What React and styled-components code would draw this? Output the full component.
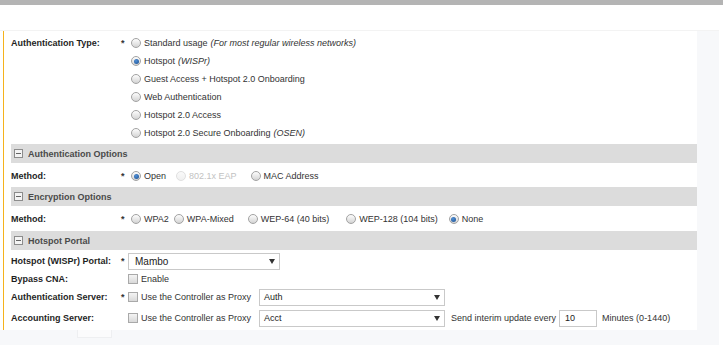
import React from 'react';
import styled, { createGlobalStyle } from 'styled-components';

const GlobalStyle = createGlobalStyle`
  html, body {
    margin: 0;
    padding: 0;
    background: #ffffff;
  }
  body {
    font-family: "Liberation Sans", Arial, sans-serif;
    font-size: 9px;
    color: #333333;
  }
`;

const TopBar = styled.div`
  height: 5px;
  background: #b4b4b4;
`;

const Page = styled.div`
  width: 719px;
  margin-top: 25px;
  display: flex;
  border-top: 1px solid #f3f3f3;
`;

const Panel = styled.div`
  flex: 1;
  margin-left: 3px;
  border-left: 1px solid #f5b21c;
  padding: 3px 0 0 7px;
  display: flex;
  flex-direction: column;
`;

const RightRail = styled.div`
  width: 22px;
  background: #f7f8fa;
`;

const Footer = styled.div`
  width: 719px;
  height: 15px;
  background: #f7f8fa;
  display: flex;
  padding-left: 77px;
  box-sizing: border-box;
`;

const GhostBox = styled.div`
  width: 33px;
  height: 7px;
  border: 1px solid #eeeff1;
  border-top: none;
  background: #fbfbfc;
`;

const Row = styled.div`
  display: grid;
  grid-template-columns: 108px 9px 1fr;
  align-items: ${p => (p.$top ? 'start' : 'center')};
  min-height: ${p => p.$h || 18}px;
`;

const Label = styled.div`
  font-weight: bold;
  color: #1f1f1f;
  line-height: 18px;
  white-space: nowrap;
`;

const Star = styled.div`
  font-weight: bold;
  color: #333333;
  line-height: 18px;
  padding-left: 2px;
`;

const Stack = styled.div`
  display: flex;
  flex-direction: column;
`;

const Line = styled.div`
  display: flex;
  align-items: center;
  height: ${p => p.$h || 18}px;
  white-space: nowrap;
`;

const Option = styled.label`
  display: inline-flex;
  align-items: center;
  margin-right: ${p => p.$gap ?? 8}px;
  color: ${p => (p.$disabled ? '#c2c2c2' : '#333333')};
`;

const RadioDot = styled.span`
  box-sizing: border-box;
  width: 10px;
  height: 10px;
  border-radius: 50%;
  margin: 0 3px;
  border: 1px solid ${p => (p.$disabled ? '#e0e0e0' : '#a2a2a2')};
  background: ${p =>
    p.$disabled
      ? 'linear-gradient(#fafafa, #f0f0f0)'
      : 'linear-gradient(#fdfdfd, #d4d4d4)'};
  display: inline-flex;
  align-items: center;
  justify-content: center;
  &::after {
    content: '';
    display: ${p => (p.$checked ? 'block' : 'none')};
    width: 5px;
    height: 5px;
    border-radius: 50%;
    background: radial-gradient(circle at 40% 35%, #4f8fd6, #1d4f8f);
  }
`;

const Box = styled.span`
  box-sizing: border-box;
  width: 10px;
  height: 10px;
  margin-right: 3px;
  border: 1px solid #a9a9a9;
  background: linear-gradient(#f4f4f4, #d9d9d9);
`;

const Italic = styled.i`
  margin-left: 3px;
`;

const Header = styled.div`
  height: 19px;
  margin: ${p => p.$mt ?? 2}px 0 ${p => p.$mb ?? 4}px;
  background: #dcdcdc;
  display: flex;
  align-items: center;
  padding-left: 3px;
  font-weight: bold;
  color: #4a4a4a;
`;

const Toggle = styled.span`
  box-sizing: border-box;
  width: 9px;
  height: 9px;
  margin-right: 5px;
  border: 1px solid #8c8c8c;
  background: #f4f4f4;
  position: relative;
  &::after {
    content: '';
    position: absolute;
    left: 1px;
    right: 1px;
    top: 3px;
    height: 1px;
    background: #666666;
  }
`;

const Select = styled.div`
  box-sizing: border-box;
  width: ${p => p.$w}px;
  height: 17px;
  border: 1px solid #c9c9c9;
  background: #ffffff;
  display: flex;
  align-items: center;
  justify-content: space-between;
  padding: 0 4px 0 ${p => p.$pl || 4}px;
  margin-left: ${p => p.$ml || 0}px;
  margin-right: 6px;
  font-size: ${p => p.$fs || 9}px;
  color: #222222;
`;

const Caret = styled.span`
  width: 0;
  height: 0;
  border-left: 3px solid transparent;
  border-right: 3px solid transparent;
  border-top: 5px solid #333333;
`;

const NumInput = styled.div`
  box-sizing: border-box;
  width: 38px;
  height: 17px;
  border: 1px solid #c9c9c9;
  padding-left: 5px;
  display: flex;
  align-items: center;
  color: #222222;
  margin: 0 5px 0 3px;
`;

const Radio = ({ children, checked, disabled, gap }) => (
  <Option $disabled={disabled} $gap={gap}>
    <RadioDot $checked={checked} $disabled={disabled} />
    {children}
  </Option>
);

const Check = ({ children }) => (
  <Option $gap={0}>
    <Box />
    {children}
  </Option>
);

const authTypes = [
  ['Standard usage', 'For most regular wireless networks', false],
  ['Hotspot', 'WISPr', true],
  ['Guest Access + Hotspot 2.0 Onboarding', null, false],
  ['Web Authentication', null, false],
  ['Hotspot 2.0 Access', null, false],
  ['Hotspot 2.0 Secure Onboarding', 'OSEN', false],
];

export default function App() {
  return (
    <>
      <GlobalStyle />
      <TopBar />
      <Page>
        <Panel>
          <Row $top>
            <Label>Authentication Type:</Label>
            <Star>*</Star>
            <Stack>
              {authTypes.map(([text, note, on]) => (
                <Line key={text}>
                  <Radio checked={on}>
                    {text}
                    {note && <Italic>({note})</Italic>}
                  </Radio>
                </Line>
              ))}
            </Stack>
          </Row>

          <Header>
            <Toggle />
            Authentication Options
          </Header>
          <Row>
            <Label>Method:</Label>
            <Star>*</Star>
            <Line>
              <Radio checked gap={7}>Open</Radio>
              <Radio disabled gap={11}>802.1x EAP</Radio>
              <Radio>MAC Address</Radio>
            </Line>
          </Row>

          <Header>
            <Toggle />
            Encryption Options
          </Header>
          <Row>
            <Label>Method:</Label>
            <Star>*</Star>
            <Line>
              <Radio gap={2}>WPA2</Radio>
              <Radio gap={11}>WPA-Mixed</Radio>
              <Radio gap={14}>WEP-64 (40 bits)</Radio>
              <Radio gap={8}>WEP-128 (104 bits)</Radio>
              <Radio checked>None</Radio>
            </Line>
          </Row>

          <Header $mt={3} $mb={2}>
            <Toggle />
            Hotspot Portal
          </Header>
          <Row>
            <Label>Hotspot (WISPr) Portal:</Label>
            <Star>*</Star>
            <Line>
              <Select $w={152} $pl={6} $fs={10}>
                Mambo
                <Caret />
              </Select>
            </Line>
          </Row>
          <Row>
            <Label>Bypass CNA:</Label>
            <Star />
            <Line>
              <Check>Enable</Check>
            </Line>
          </Row>
          <Row>
            <Label>Authentication Server:</Label>
            <Star>*</Star>
            <Line>
              <Check>Use the Controller as Proxy</Check>
              <Select $w={186} $ml={8}>
                Auth
                <Caret />
              </Select>
            </Line>
          </Row>
          <Row $h={24}>
            <Label>Accounting Server:</Label>
            <Star />
            <Line $h={24}>
              <Check>Use the Controller as Proxy</Check>
              <Select $w={186} $ml={8}>
                Acct
                <Caret />
              </Select>
              Send interim update every
              <NumInput>10</NumInput>
              Minutes (0-1440)
            </Line>
          </Row>
        </Panel>
        <RightRail />
      </Page>
      <Footer>
        <GhostBox />
      </Footer>
    </>
  );
}
